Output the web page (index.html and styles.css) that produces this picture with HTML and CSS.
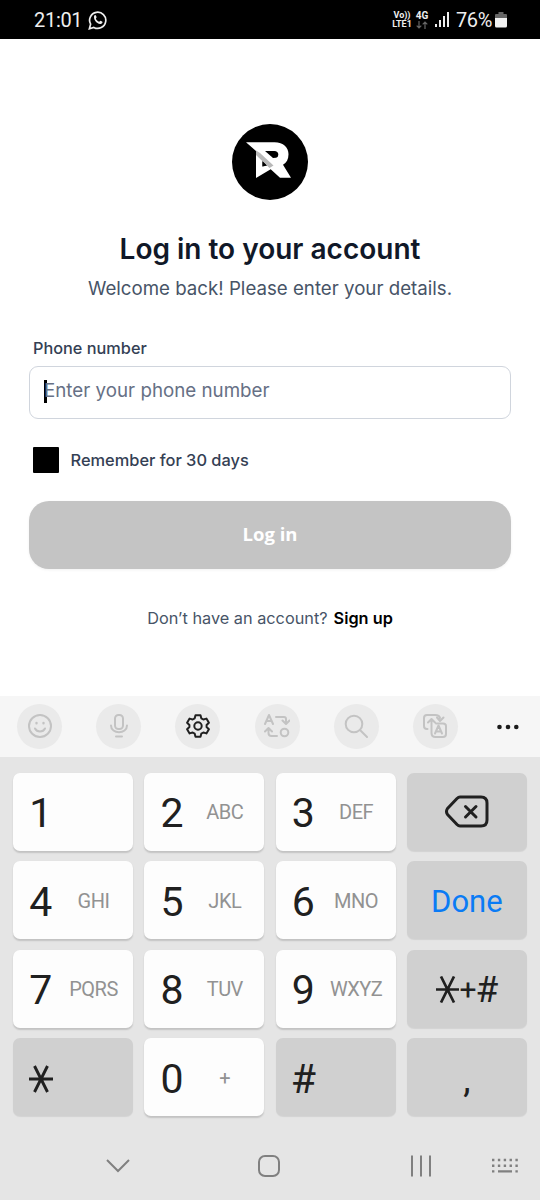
FILE: index.html
```html
<!DOCTYPE html>
<html lang="en">
<head>
<meta charset="utf-8">
<meta name="viewport" content="width=device-width">
<title>Log in</title>
<link rel="stylesheet" href="styles.css">
</head>
<body>
<div class="phone">
  <header class="status">
    <span class="clock">21:01</span>
    <svg class="whatsapp" width="20" height="20" viewBox="0 0 20 20" fill="none" stroke="#eee" stroke-width="1.7"><path d="M1.4 18.7l1.2-4.5a8.1 8.1 0 1 1 3.2 3.2z"/><path d="M6.3 5.5c.6-.8 1.3-.8 1.6-.1l.7 1.7c.2.5-.7 1.1-.7 1.6.6 1.4 1.7 2.4 3.2 3 .6 0 1.1-1.1 1.6-.9l1.7.9c.4.4-.1 1.6-1 2-3.800 1.600-8.700-4.400-7.100-8.200z" fill="#eee" stroke="none"/></svg>
    <div class="volte"><span>Vo))</span><span>LTE1</span></div>
    <div class="network"><span>4G</span>
      <svg width="12" height="8" viewBox="0 0 12 8" fill="none" stroke="#666" stroke-width="1.2"><path d="M3 0v7M.7 4.700L3 7l2.300-2.300M9 8V1M6.700 3.300L9 1l2.300 2.300"/></svg>
    </div>
    <svg class="signal" width="15" height="15" viewBox="0 0 15 15" fill="#eee"><path d="M0 12h2v3H0zM4 8h2v7H4zM8 4h2v11H8zM12 0h2v15h-2z"/></svg>
    <span class="percent">76%</span>
    <svg class="battery" width="12" height="16" viewBox="0 0 12 16"><path d="M3.500 0h5v2H11q1 0 1 1v3H0V3q0-1 1-1h2.500z" fill="#666"/><path d="M0 6h12v8q0 1.500-1.500 1.500h-9Q0 15.500 0 14z" fill="#f2f2f2"/></svg>
  </header>

  <main class="login">
    <svg class="logo" width="76" height="76" viewBox="0 0 76 76">
      <circle cx="38" cy="38" r="38"/>
      <path d="M14 18.300H42.500c9 0 14 5 14 12 0 5-2 8.500-5.500 10.500L59 53.700H48l-9.300-8.400L24 54V27z" fill="#fff"/>
      <path d="M33 27h9.500c4.500 0 5 5.500 1.500 6.800l-3 .2z"/>
      <path d="M30.500 36l5 5.500-5 1z"/>
      <path d="M24 26.500v4.500l13.500 13 4-2.500L28 29z" fill="#b8b8b8"/>
      <path d="M30.500 37.500l3.500 3.500-3.500 1.500z"/>
    </svg>
    <h1 class="title">Log in to your account</h1>
    <p class="subtitle">Welcome back! Please enter your details.</p>
    <label class="label">Phone number</label>
    <div class="field"><span class="caret"></span><span class="placeholder">Enter your phone number</span></div>
    <div class="remember"><span class="check"></span><span>Remember for 30 days</span></div>
    <button class="submit">Log in</button>
    <p class="signup"><span>Don’t have an account?</span><b>Sign up</b></p>
  </main>

  <div class="tools">
    <span class="tool"><svg width="24" height="24" viewBox="0 0 24 24"><circle cx="12" cy="12" r="11"/><path d="M7 14.500c2 4 8 4 10 0"/><path d="M8.500 9v.3M15.500 9v.3" stroke-width="2.400"/></svg></span>
    <span class="tool"><svg width="24" height="24" viewBox="0 0 24 24"><rect x="8" y="1" width="8" height="14" rx="3.500"/><path d="M4 11.500c0 9 16 9 16 0M9 22.500h6"/></svg></span>
    <span class="tool active"><svg width="24" height="24" viewBox="0 0 24 24"><path d="M9.500 1.200h5l.8 3.100 2 1.200 3.100-.9 2.500 4.200-2.300 2.200v2l2.300 2.200-2.500 4.200-3.100-.9-2 1.200-.8 3.100h-5l-.8-3.100-2-1.200-3.100.9-2.500-4.200L3.400 13v-2L1.100 8.800l2.500-4.200 3.100.9 2-1.200z"/><circle cx="12" cy="12" r="3.700"/></svg></span>
    <span class="tool"><svg width="26" height="26" viewBox="0 0 26 26"><path d="M1 11L5 2l4 9M2.500 8h5M12 4h8q2 0 2 2v4M18.500 7.500L22 11l3.500-3.500M1 18.500L4.500 15 8 18.500M4.500 15v5q0 3 3 3H13"/><circle cx="20.500" cy="19.500" r="3.800"/></svg></span>
    <span class="tool"><svg width="24" height="24" viewBox="0 0 24 24"><circle cx="10" cy="10" r="8.300"/><path d="M16 16l7 7"/></svg></span>
    <span class="tool"><svg width="24" height="24" viewBox="0 0 24 24"><path d="M4.500 15H4q-3 0-3-3V4q0-3 3-3h8q4.500 0 5 3M14 3.500L17 7l3.500-3.500M5 8.500L8.500 5 12 8.500M8.500 5v14q0 4 4 4H20q3 0 3-3v-8q0-2.500-3-2.500h-7"/><path d="M12 19.500l3.500-8 3.500 8M13 17.500h5"/></svg></span>
    <svg class="more" width="22" height="6" viewBox="0 0 22 6" fill="#1c1c1c"><circle cx="2.500" cy="3" r="2.300"/><circle cx="11" cy="3" r="2.300"/><circle cx="19.300" cy="3" r="2.300"/></svg>
  </div>

  <div class="keys">
    <div class="key"><b>1</b></div>
    <div class="key"><b>2</b><i>ABC</i></div>
    <div class="key"><b>3</b><i>DEF</i></div>
    <div class="key dark center"><svg width="44" height="34" viewBox="0 0 44 34" fill="none" stroke="#202020" stroke-width="3" stroke-linecap="round" stroke-linejoin="round"><path d="M15 2h21q6 0 6 6v17q0 6-6 6H15q-1.500 0-3-1.500L2.500 19.500q-2-3 0-6L12 3.500Q13.500 2 15 2z"/><path d="M20.500 11.500l10.500 10.500M31 11.500L20.500 22"/></svg></div>
    <div class="key"><b>4</b><i>GHI</i></div>
    <div class="key"><b>5</b><i>JKL</i></div>
    <div class="key"><b>6</b><i>MNO</i></div>
    <div class="key dark center done">Done</div>
    <div class="key"><b>7</b><i>PQRS</i></div>
    <div class="key"><b>8</b><i>TUV</i></div>
    <div class="key"><b>9</b><i>WXYZ</i></div>
    <div class="key dark center symbols"><svg width="23" height="27" viewBox="0 0 23 27" stroke="#202020" stroke-width="2.700"><path d="M0 13.500h23M5 .5l13 26M18 .5L5 26.500"/></svg><span class="plus">+</span><span>#</span></div>
    <div class="key dark"><b><svg width="24" height="28" viewBox="0 0 24 28" stroke="#202020" stroke-width="2.900"><path d="M0 14h24M5.500 1l13 26M18.500 1l-13 26"/></svg></b></div>
    <div class="key"><b>0</b><i>+</i></div>
    <div class="key dark"><b class="hash">#</b></div>
    <div class="key dark center comma">,</div>
  </div>

  <nav class="nav">
    <svg width="24" height="14" viewBox="0 0 24 14"><path d="M1 1l11 11L23 1"/></svg>
    <svg width="22" height="22" viewBox="0 0 22 22"><rect x="1" y="1" width="20" height="20" rx="6"/></svg>
    <svg width="22" height="22" viewBox="0 0 22 22"><path d="M2 .5v21M11 .5v21M20 .5v21"/></svg>
    <svg width="26" height="16" viewBox="0 0 26 16"><path d="M0 2h26M0 7.700h26" stroke-width="2.400" stroke-dasharray="2.400 3.450"/><path d="M0 13.400h2.400M6 13.400h14M23.400 13.400h2.400" stroke-width="2.400"/></svg>
  </nav>
</div>
</body>
</html>
```
FILE: styles.css
```css
* { box-sizing: border-box; }
body { margin: 0; background: #fff; font-family: Inter, sans-serif; }
h1, p { margin: 0; }
svg { display: block; flex: none; }
.phone { width: 540px; height: 1200px; display: flex; flex-direction: column; overflow: hidden; }

.status { height: 39px; flex: none; background: #000; color: #eee; display: flex; align-items: center; padding: 0 33px 0 34px; font: 20px/39px Roboto, sans-serif; white-space: nowrap; }
.clock { width: 47px; padding-top: 2px; letter-spacing: -.3px; }
.whatsapp { margin-left: 7px; }
.volte { width: 20px; margin-left: 284px; padding-top: 1px; display: flex; flex-direction: column; align-items: center; font: bold 9px/9px Roboto, sans-serif; }
.network { width: 14px; margin-left: 3px; display: flex; flex-direction: column; align-items: center; font: bold 10px/10px Roboto, sans-serif; }
.signal { margin-left: 6px; }
.percent { margin-left: 6px; padding-top: 2px; width: 37px; letter-spacing: -.4px; }
.battery { margin-left: 2px; }

.login { height: 657px; flex: none; padding: 84.500px 29px 0; display: flex; flex-direction: column; }
.logo { align-self: center; }
.title { margin-top: 31.500px; text-align: center; font-size: 28px; line-height: 36px; font-weight: 600; color: #101828; white-space: nowrap; }
.subtitle { margin-top: 8px; text-align: center; font-size: 18.700px; line-height: 28px; color: #475467; white-space: nowrap; }
.label { margin: 33.500px 0 0 4px; font-size: 16.300px; line-height: 22px; font-weight: 500; color: #344054; }
.field { margin-top: 7.500px; height: 52.500px; border: 1.500px solid #d0d5dd; border-radius: 9px; display: flex; align-items: center; padding: 0 0 2px 14px; }
.caret { width: 3px; height: 23px; background: #000; margin-right: -3px; }
.placeholder { font-size: 18.750px; line-height: 26px; color: #667085; }
.remember { margin: 28px 0 0 4px; height: 26px; display: flex; align-items: center; gap: 11.500px; font-size: 16.400px; font-weight: 500; color: #344054; }
.check { width: 26px; height: 26px; background: #000; border-radius: 1px; }
.submit { margin-top: 28px; height: 68px; padding: 0 0 2px; border: 0; border-radius: 20px; background: #c4c4c4; color: #fff; font: bold 18.500px "Open Sans", sans-serif; box-shadow: 0 1px 3px rgba(0,0,0,.06); }
.signup { margin-top: 37px; display: flex; justify-content: center; gap: 6px; font-size: 16.300px; line-height: 24px; color: #475467; white-space: nowrap; }
.signup b { font-weight: 600; color: #000; }

.tools { height: 61px; flex: none; background: #f6f6f6; display: flex; align-items: center; padding: 0 0 1px 17px; gap: 34.200px; }
.tool { width: 45px; height: 45px; border-radius: 50%; background: #eaeaea; display: grid; place-items: center; flex: none; }
.tool svg { fill: none; stroke: #c3c3c3; stroke-width: 2; stroke-linecap: round; stroke-linejoin: round; }
.tool.active svg { stroke: #202020; }
.more { margin: 2px 0 0 5px; }

.keys { height: 373px; flex: none; background: #e5e5e5; padding: 15.500px 13px 0; display: grid; grid-template-columns: repeat(4, 120px); grid-auto-rows: 78px; column-gap: 11.300px; row-gap: 10.500px; font-family: Roboto, sans-serif; color: #202020; }
.key { background: #fdfdfd; border-radius: 7px; box-shadow: 0 1.500px 1.500px rgba(0,0,0,.15); display: grid; grid-template-columns: 55.500px 50px; align-items: center; justify-items: center; }
.key b { font-weight: 400; font-size: 41px; line-height: 48px; padding-top: 3px; }
.key i { font-style: normal; font-size: 20px; line-height: 24px; color: #929292; padding-top: 1px; letter-spacing: -.5px; }
.key.dark { background: #d0d0d0; box-shadow: 0 1px 1px rgba(0,0,0,.08); }
.key.center { display: flex; justify-content: center; }
.key.done { font-size: 31px; color: #0a7bf5; padding-top: 3px; }
.key.symbols { font-size: 37px; padding-top: 1px; }
.symbols svg { margin-left: 1px; }
.symbols span { margin-left: -1px; }
.symbols .plus { font-size: 30px; margin-left: 0; }
.key.comma { font-size: 37px; padding-top: 4px; }

.nav { flex: 1; background: #e5e5e5; display: flex; align-items: center; padding: 2px 0 0 106px; }
.nav svg { fill: none; stroke: #808080; stroke-width: 2; }
.nav svg:nth-child(2) { margin-left: 128px; }
.nav svg:nth-child(3) { margin-left: 130px; }
.nav svg:nth-child(4) { margin-left: 60px; }
```
